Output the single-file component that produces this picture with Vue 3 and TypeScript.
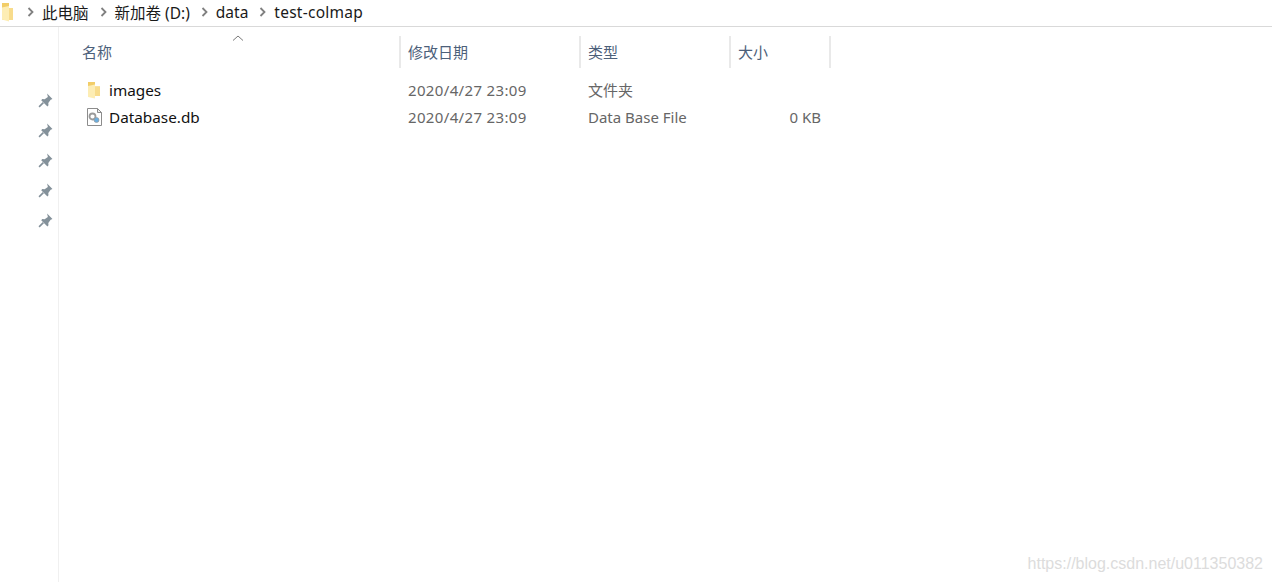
<script setup lang="ts">
interface Row {
  name: string
  date: string
  type: string
  size: string
  kind: 'folder' | 'file'
}

const crumbs = ['此电脑', '新加卷 (D:)', 'data', 'test-colmap']
const pins = [1, 2, 3, 4, 5]
const columns = [
  { label: '名称', cls: 'col-name' },
  { label: '修改日期', cls: 'col-date' },
  { label: '类型', cls: 'col-type' },
  { label: '大小', cls: 'col-size' }
]
const rows: Row[] = [
  { name: 'images', date: '2020/4/27 23:09', type: '文件夹', size: '', kind: 'folder' },
  { name: 'Database.db', date: '2020/4/27 23:09', type: 'Data Base File', size: '0 KB', kind: 'file' }
]
</script>

<template>
  <div class="explorer">
    <div class="crumbbar">
      <svg class="bar-folder" width="14" height="20" viewBox="0 0 14 20">
        <path d="M2 1h7v5h4v12H3l-1-1z" fill="#f2cd68" />
        <path d="M9 6h4v12H9z" fill="#f8dc8c" />
        <path d="M2 5.500l7-1.500v15.500l-7-2z" fill="#fdedb4" />
      </svg>
      <template v-for="c in crumbs" :key="c">
        <svg class="chev" width="7" height="10" viewBox="0 0 7 10">
          <path d="M1.500 1l4 4-4 4" fill="none" stroke="#808080" stroke-width="1.800" />
        </svg>
        <span class="crumb">{{ c }}</span>
      </template>
    </div>

    <div class="body">
      <aside class="pins">
        <svg v-for="p in pins" :key="p" class="pin" width="15" height="15" viewBox="0 0 14 14">
          <path d="M8.500.5l5 5-1.700.8-2.200 3 .2 2.200-1 1-5.800-5.800 1-1 2.200.2 3-2.200z" fill="#84919a" />
          <path d="M5 9l-4 4" stroke="#84919a" stroke-width="1.500" fill="none" />
        </svg>
      </aside>

      <main class="list">
        <svg class="sort" width="12" height="6" viewBox="0 0 12 6">
          <path d="M1 5.500l5-4.500 5 4.500" fill="none" stroke="#7a7a7a" stroke-width="1" />
        </svg>
        <div class="head">
          <div v-for="col in columns" :key="col.label" class="hcell" :class="col.cls">{{ col.label }}</div>
        </div>
        <div class="rows">
          <div v-for="row in rows" :key="row.name" class="row">
            <div class="col-name name-cell">
              <svg v-if="row.kind === 'folder'" width="15" height="18" viewBox="0 0 15 18">
                <path d="M1 1h7v4.500h5V15H2l-1-1z" fill="#f2cd68" />
                <path d="M8 5.500h5V15H8z" fill="#f8dc8c" />
                <path d="M1 5l7-1.500V17.500L1 16z" fill="#fdedb4" />
              </svg>
              <svg v-else width="15" height="18" viewBox="0 0 15 18">
                <path d="M.5.500h10l4 4v13H.5z" fill="#fff" stroke="#8c8c8c" />
                <path d="M10.500.5v4h4z" fill="#eee" stroke="#8c8c8c" />
                <circle cx="5.500" cy="8.500" r="3" fill="none" stroke="#9a9a9a" stroke-width="1.800" />
                <circle cx="9.500" cy="12" r="2.500" fill="#6aaee0" stroke="#9a9a9a" stroke-width=".7" />
              </svg>
              <span class="fname">{{ row.name }}</span>
            </div>
            <div class="col-date cell date">{{ row.date }}</div>
            <div class="col-type cell">{{ row.type }}</div>
            <div class="col-size cell size">{{ row.size }}</div>
          </div>
        </div>
      </main>
    </div>

    <div class="watermark">https://blog.csdn.net/u011350382</div>
  </div>
</template>

<style scoped>
.explorer {
  position: relative;
  width: 1272px;
  height: 582px;
  overflow: hidden;
  background: #fff;
  font-family: "Noto Sans", "Noto Sans CJK SC", sans-serif;
  font-size: 15px;
  color: #1a1a1a;
}
.crumbbar {
  display: flex;
  align-items: center;
  height: 27px;
  box-sizing: border-box;
  padding-bottom: 2px;
  border-bottom: 1px solid #d9d9d9;
  font-size: 15.5px;
}
.bar-folder {
  margin-right: 13px;
}
.chev {
  margin-right: 8px;
}
.crumb {
  margin-right: 11px;
}
.crumb:last-child {
  letter-spacing: 0.25px;
}
.body {
  display: flex;
  height: 555px;
}
.pins {
  width: 59px;
  box-sizing: border-box;
  border-right: 1px solid #f0f0f0;
  display: flex;
  flex-direction: column;
  align-items: flex-end;
  gap: 15px;
  padding: 66px 5px 0 0;
}
.list {
  position: relative;
  flex: 1;
  padding-top: 9px;
}
.sort {
  position: absolute;
  left: 173px;
  top: 8px;
}
.head {
  display: flex;
  height: 32px;
  align-items: stretch;
}
.hcell {
  display: flex;
  align-items: center;
  box-sizing: border-box;
  padding: 0 0 2px 7px;
  border-right: 2px solid #e9e9e9;
  color: #4c607a;
}
.col-name {
  width: 342px;
  flex: none;
  box-sizing: border-box;
}
.hcell.col-name {
  padding-left: 23px;
}
.col-date {
  width: 180px;
  flex: none;
  box-sizing: border-box;
}
.col-type {
  width: 150px;
  flex: none;
  box-sizing: border-box;
}
.col-size {
  width: 100px;
  flex: none;
  box-sizing: border-box;
}
.rows {
  margin-top: 8px;
}
.row {
  display: flex;
  align-items: center;
  height: 27px;
}
.name-cell {
  display: flex;
  align-items: center;
  gap: 7px;
  padding-left: 28px;
  font-size: 15.3px;
}
.fname {
  color: #111;
}
.cell {
  padding-left: 7px;
  color: #666;
}
.date {
  letter-spacing: 0.35px;
}
.size {
  padding: 0 10px 0 0;
  text-align: right;
}
.watermark {
  position: absolute;
  right: 9px;
  bottom: 9px;
  font-family: "Liberation Sans", sans-serif;
  font-size: 16px;
  color: #dcdcdc;
}
</style>
